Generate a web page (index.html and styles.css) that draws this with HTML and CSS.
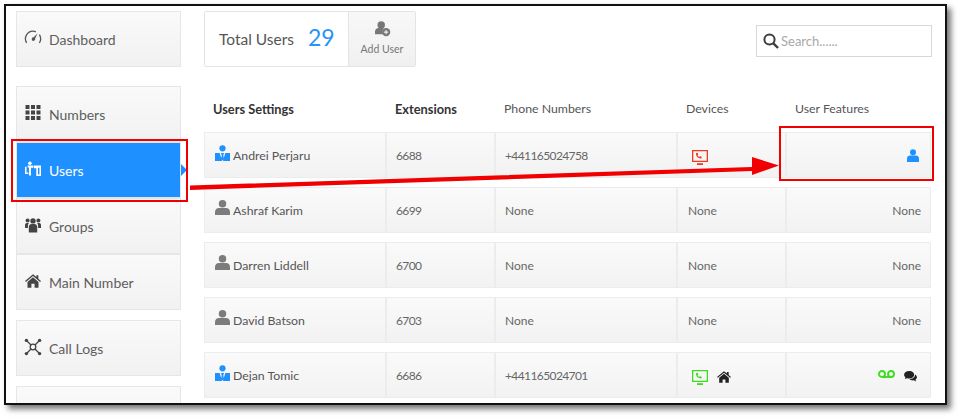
FILE: index.html
```html
<!DOCTYPE html>
<html lang="en">
<head>
<meta charset="utf-8">
<title>Users</title>
<link rel="stylesheet" href="styles.css">
</head>
<body>
<div class="frame">
  <div class="page">
    <nav class="sidebar">
      <div class="nav-group">
        <a class="nav-item"><svg class="nav-icon big" viewBox="0 0 18 18"><path d="M2.600 13.800A7.600 7.600 0 0 1 9 2.200c1.100 0 2 .2 2.900.6M15.400 5.600a7.600 7.600 0 0 1 0 8.200" fill="none" stroke="#555" stroke-width="1.300"/><path d="M13.600 4.200 9.800 8.300a1.800 1.800 0 1 0 1.400 1.300z" fill="#555"/></svg><span>Dashboard</span></a>
      </div>
      <div class="nav-group">
        <a class="nav-item"><svg class="nav-icon" viewBox="0 0 16 16"><g fill="#444"><rect x="0.500" width="4" height="4"/><rect x="6" width="4" height="4"/><rect x="11.500" width="4" height="4"/><rect x="0.500" y="5.500" width="4" height="4"/><rect x="6" y="5.500" width="4" height="4"/><rect x="11.500" y="5.500" width="4" height="4"/><rect x="0.500" y="11" width="4" height="4"/><rect x="6" y="11" width="4" height="4"/><rect x="11.500" y="11" width="4" height="4"/></g></svg><span>Numbers</span></a>
        <a class="nav-item active"><svg class="nav-icon" viewBox="0 0 17 16"><g fill="#fff"><circle cx="5.200" cy="1.800" r="1.900"/><path d="M0 5.500h1.600v6.200h2v1.700H0z"/><path d="M2.800 4.200h6v2.600H6.400v8H4.200V6.400H2.800z"/><path d="M9.400 4.200H17V15.500h-5V7.300H9.400zM13.800 6.600v7.300h1.500V6.600z"/></g></svg><span>Users</span></a>
        <a class="nav-item"><svg class="nav-icon" viewBox="0 0 16 15"><g fill="#444"><circle cx="8" cy="3.400" r="2.700"/><circle cx="2.600" cy="3" r="2"/><circle cx="13.400" cy="3" r="2"/><path d="M3.800 15V9.500c0-2 1.400-3 2.800-3h2.800c1.400 0 2.800 1 2.800 3V15z"/><path d="M0 10.500V7.500c0-1.300.8-2 1.800-2h2c-.6.800-.9 1.900-.9 3v2zM16 10.500V7.500c0-1.300-.8-2-1.800-2h-2c.6.800.9 1.900.9 3v2z"/></g></svg><span>Groups</span></a>
        <a class="nav-item"><svg class="nav-icon" viewBox="0 0 18 15"><g fill="#444"><path d="M9 0 0 7.400l1 1.200L9 2l8 6.600 1-1.200-3-2.500V1h-2.200v2.100z"/><path d="M9 3.400 2.800 8.600V15h4.400v-4.400h3.600V15h4.400V8.600z"/></g></svg><span>Main Number</span></a>
      </div>
      <div class="nav-group">
        <a class="nav-item"><svg class="nav-icon big" viewBox="0 0 18 18"><g fill="none" stroke="#444" stroke-width="1.300"><circle cx="9" cy="9" r="2.800"/><path d="M7 7 3 3M11 7l4-4M7 11l-4 4M11 11l4 4"/></g><g fill="#444"><circle cx="2.400" cy="2.400" r="1.700"/><circle cx="15.600" cy="2.400" r="1.700"/><circle cx="2.400" cy="15.600" r="1.700"/><circle cx="15.600" cy="15.600" r="1.700"/></g></svg><span>Call Logs</span></a>
      </div>
      <div class="nav-group">
        <a class="nav-item"></a>
      </div>
    </nav>
    <main class="content">
      <div class="topbar">
        <div class="summary">
          <div class="total"><span class="total-label">Total Users</span><span class="total-count">29</span></div>
          <a class="add-user">
            <svg class="add-icon" viewBox="0 0 18 18"><circle cx="7" cy="4.400" r="4.200" fill="#777"/><path d="M0 15v-3c0-2.400 2-4 4-4h6a6 6 0 0 0-1 7z" fill="#777"/><circle cx="12.500" cy="12.500" r="4.700" fill="#777"/><path d="M10 12.500h5M12.500 10v5" stroke="#eee" stroke-width="1.300"/></svg>
            <span>Add User</span>
          </a>
        </div>
        <div class="search">
          <svg class="search-icon" viewBox="0 0 16 16"><circle cx="6.500" cy="6.500" r="5.100" fill="none" stroke="#3d3d3d" stroke-width="2"/><path d="m10.400 10.400 4.600 4.600" stroke="#3d3d3d" stroke-width="2.400"/></svg>
          <span class="search-text">Search......</span>
        </div>
      </div>
      <div class="table">
        <div class="row head">
          <div class="c1 strong">Users Settings</div>
          <div class="c2 strong">Extensions</div>
          <div class="c3">Phone Numbers</div>
          <div class="c4">Devices</div>
          <div class="c5">User Features</div>
        </div>
        <div class="row">
          <div class="cell c1"><svg class="user-icon" viewBox="0 0 16 18"><use href="#manager"/></svg><span>Andrei Perjaru</span></div>
          <div class="cell c2 num">6688</div>
          <div class="cell c3 num">+441165024758</div>
          <div class="cell c4"><svg class="device red" viewBox="0 0 16 16"><use href="#phone-screen"/></svg></div>
          <div class="cell c5"><svg class="feature-user" viewBox="0 0 12 13"><circle cx="6" cy="3.200" r="3" fill="#1e90ff"/><path d="M0 13V9.500C0 7.500 1.500 6.500 3 6.500h6c1.500 0 3 1 3 3V13z" fill="#1e90ff"/></svg></div>
        </div>
        <div class="row">
          <div class="cell c1"><svg class="user-icon" viewBox="0 0 16 18"><use href="#person"/></svg><span>Ashraf Karim</span></div>
          <div class="cell c2 num">6699</div>
          <div class="cell c3">None</div>
          <div class="cell c4">None</div>
          <div class="cell c5">None</div>
        </div>
        <div class="row">
          <div class="cell c1"><svg class="user-icon" viewBox="0 0 16 18"><use href="#person"/></svg><span>Darren Liddell</span></div>
          <div class="cell c2 num">6700</div>
          <div class="cell c3">None</div>
          <div class="cell c4">None</div>
          <div class="cell c5">None</div>
        </div>
        <div class="row">
          <div class="cell c1"><svg class="user-icon" viewBox="0 0 16 18"><use href="#person"/></svg><span>David Batson</span></div>
          <div class="cell c2 num">6703</div>
          <div class="cell c3">None</div>
          <div class="cell c4">None</div>
          <div class="cell c5">None</div>
        </div>
        <div class="row">
          <div class="cell c1"><svg class="user-icon" viewBox="0 0 16 18"><use href="#manager"/></svg><span>Dejan Tomic</span></div>
          <div class="cell c2 num">6686</div>
          <div class="cell c3 num">+441165024701</div>
          <div class="cell c4"><svg class="device green" viewBox="0 0 16 16"><use href="#phone-screen"/></svg><svg class="home" viewBox="0 0 18 15"><path fill="#222" d="M9 0 0 7.400l1 1.200L9 2l8 6.600 1-1.200-3-2.500V1h-2.200v2.100z"/><path fill="#222" d="M9 3.400 2.800 8.600V15h4.400v-4.400h3.600V15h4.400V8.600z"/></svg></div>
          <div class="cell c5 features"><svg class="voicemail" viewBox="0 0 17 9"><g fill="none" stroke="#3ddc1e" stroke-width="1.900"><circle cx="4" cy="4" r="3"/><circle cx="13" cy="4" r="3"/><path d="M4 7h9"/></g></svg><svg class="chat" viewBox="0 0 14 12"><path fill="#222" d="M5.500 0C2.500 0 0 1.700 0 4c0 1.100.6 2.100 1.500 2.800L.8 8.800l2.500-1c.7.200 1.400.3 2.200.3 3 0 5.500-1.800 5.500-4.100S8.500 0 5.500 0z"/><path fill="#222" d="M12 3.700c0 3-2.900 5-6.300 5.100.8 1 2.200 1.500 3.700 1.500.4 0 .8 0 1.200-.1l2.400 1.200-.6-2C13.400 8.800 14 7.800 14 6.800c0-1.300-.8-2.400-2-3.100z"/></svg></div>
        </div>
      </div>
    </main>
    <svg class="annotations" viewBox="0 0 939 397">
      <polygon points="184,179.500 746,161 746,151 773,159.500 746,169 746,165 184,184" fill="#f00000"/>
    </svg>
    <div class="callout callout-users"></div>
    <div class="callout callout-features"></div>
  </div>
</div>
<svg class="defs" width="0" height="0">
  <defs>
    <g id="manager"><circle cx="8" cy="3.500" r="3.300" fill="#1e90ff"/><path fill="#1e90ff" d="M0 8.500h5L7.500 17H0zM11 8.500h5V17H8.500zM6.400 8.500h3.200L8.800 11l.7 3.500L8 16.500l-1.500-2 .7-3.500z"/></g>
    <g id="person"><circle cx="8" cy="4" r="4" fill="#7c7c7c"/><path fill="#7c7c7c" d="M0 16v-3.500C0 10 2 8.500 4 8.500h8c2 0 4 1.500 4 4V16z"/></g>
    <g id="phone-screen"><path fill="currentColor" fill-rule="evenodd" d="M0 0h16v12H0zM1.300 1.300v9.400h13.400V1.300z"/><path fill="currentColor" d="M5 13.200h6v1.800H5z"/><path fill="currentColor" d="M4 3.200 5.600 2.800l.8 1.700-.9.7c.4.8 1 1.400 1.800 1.800l.8-.9 1.700.8-.4 1.500c-3 .3-5.700-2.200-5.400-5.200z"/></g>
  </defs>
</svg>
</body>
</html>
```

FILE: styles.css
```css
* { box-sizing: border-box; }
html, body { margin: 0; padding: 0; background: #fff; overflow: hidden; }
body { width: 961px; height: 419px; font-family: Lato, "Noto Sans", sans-serif; color: #555; }
.frame { width: 943px; height: 401px; margin: 4px 0 0 4px; border: 2px solid #111; box-shadow: 4px 4px 6px rgba(0,0,0,.55); background: #fff; overflow: hidden; }
.page { position: relative; display: flex; width: 939px; height: 397px; overflow: hidden; }
.defs { position: absolute; }

.sidebar { width: 175px; padding: 5px 0 0 10px; display: flex; flex-direction: column; gap: 19px; flex: none; }
.nav-group { display: flex; flex-direction: column; width: 165px; flex: none; }
.nav-group:nth-child(3), .nav-group:nth-child(4) { margin-top: -9px; }
.nav-item { display: flex; align-items: center; height: 56px; padding-left: 9px; background: linear-gradient(#fafafa, #f1f1f1); box-shadow: inset 0 0 0 1px #e6e6e6; color: #5e5e5e; font-size: 14px; gap: 8px; }
.nav-item.active { position: relative; background: #1e90ff; color: #fff; }
.nav-item.active::after { content: ""; position: absolute; right: -6px; top: 22px; border-left: 6px solid #1e90ff; border-top: 6px solid transparent; border-bottom: 6px solid transparent; }
.nav-icon { width: 16px; height: 16px; flex: none; margin-top: -3px; }
.nav-icon.big { width: 18px; height: 18px; margin-left: -1px; margin-right: -1px; }

.content { width: 728px; padding: 5px 0 0 23px; flex: none; }
.topbar { display: flex; justify-content: space-between; align-items: flex-start; height: 88px; width: 728px; }
.summary { display: flex; width: 212px; height: 56px; border: 1px solid #e4e4e4; border-radius: 2px; }
.total { width: 144px; display: flex; align-items: center; padding-left: 14px; gap: 14px; border-right: 1px solid #e4e4e4; }
.total-label { font-size: 15.500px; color: #555; }
.total-count { font-size: 23px; line-height: 1; color: #2a94f4; margin-top: -4px; }
.add-user { flex: 1; display: flex; flex-direction: column; align-items: center; justify-content: center; gap: 6px; padding-bottom: 2px; background: linear-gradient(#f8f8f8, #f0f0f0); font-size: 10.500px; color: #777; }
.add-icon { width: 16px; height: 16px; margin-left: 2px; }
.search { margin-top: 14px; width: 176px; height: 32px; border: 1px solid #d8d8d8; display: flex; align-items: center; padding-left: 6px; gap: 2px; }
.search-icon { width: 16px; height: 16px; flex: none; }
.search-text { font-size: 13px; color: #a8a8a8; }

.table { display: flex; flex-direction: column; gap: 9px; width: 727px; }
.row { display: grid; grid-template-columns: 182px 109px 182px 109px 145px; height: 46px; }
.row.head { height: 24px; padding-top: 2px; font-size: 12.300px; color: #555; align-items: start; }
.row.head > div { padding-left: 9px; }
.row.head > .strong { font-weight: 700; color: #333; font-size: 12.800px; }
.cell { display: flex; align-items: center; padding-left: 9px; padding-top: 1px; background: linear-gradient(#fafafa, #f2f2f2); border: 1px solid #ececec; font-size: 12px; color: #666; }
.cell.num { letter-spacing: -.6px; }
.cell.c1 { gap: 3px; color: #555; font-size: 12.300px; }
.cell.c5 { justify-content: flex-end; padding-right: 9px; }
.user-icon { width: 15px; height: 17px; flex: none; margin-top: -4px; margin-left: 1px; }
.device { width: 16px; height: 16px; margin-top: 4px; flex: none; margin-left: 4px; }
.cell.c4 { padding-left: 10px; }
.red { color: #f23a1e; }
.green { color: #3ddc1e; }
.home { width: 14px; height: 12px; margin-left: 9px; margin-top: 3px; flex: none; }
.feature-user { width: 12px; height: 13px; margin-right: 2px; }
.cell.c5.features { gap: 9px; padding-right: 13px; align-items: flex-start; padding-top: 17px; }
.voicemail { width: 17px; height: 9px; }
.chat { width: 13px; height: 11px; margin-top: 1px; }

.annotations { position: absolute; left: 0; top: 0; width: 939px; height: 397px; pointer-events: none; }
.callout { position: absolute; border: 2px solid #f00000; }
.callout-users { left: 5px; top: 133px; width: 177px; height: 63px; }
.callout-features { left: 773px; top: 120px; width: 155px; height: 55px; }
```
